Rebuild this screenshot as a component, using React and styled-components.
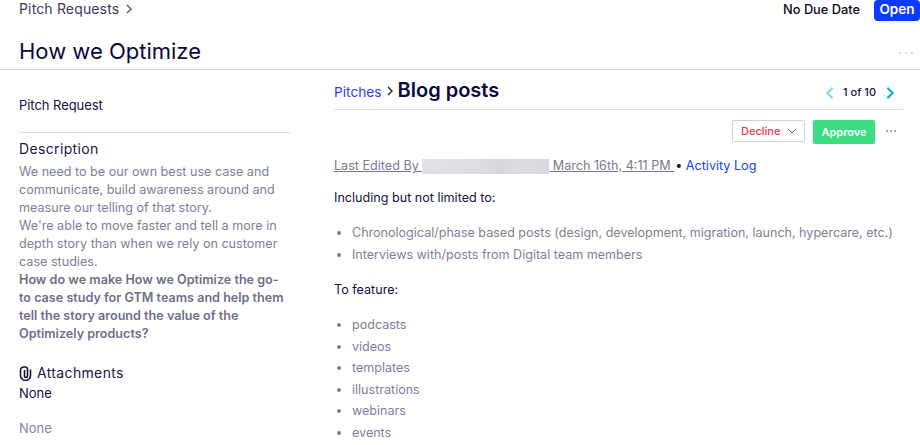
import React from "react";
import styled, { createGlobalStyle } from "styled-components";

const Global = createGlobalStyle`
  html, body { margin: 0; padding: 0; background: #fff; overflow: hidden; }
  body { font-family: Inter, "Liberation Sans", sans-serif; color: #0e0b3d; }
  * { box-sizing: border-box; }
`;
const Page = styled.div`width: 920px; height: 445px; overflow: hidden;`;
const TopBar = styled.div`display: flex; justify-content: space-between; align-items: flex-start; padding-left: 19px; height: 36px;`;
const Crumb = styled.div`display: flex; align-items: center; gap: 4px; font-size: 14px; line-height: 18px; color: #3c3a5e; letter-spacing: .15px;`;
const TopRight = styled.div`display: flex; align-items: flex-start; gap: 14px;`;
const Due = styled.span`font-size: 12.8px; font-weight: 500; line-height: 19px; color: #0b0b1e;`;
const OpenBadge = styled.span`background: #0b3bff; color: #fff; font-size: 13.5px; font-weight: 600; height: 21px; line-height: 19px; width: 46px; text-align: center; border-radius: 4px;`;
const TitleRow = styled.div`display: flex; justify-content: space-between; align-items: center; height: 34px; padding: 0 7px 0 19px; border-bottom: 1px solid #d0d0d8;`;
const Title = styled.h1`margin: 0 0 3px; font-size: 22px; font-weight: 400; line-height: 30px; color: #0a0a3a;`;
const Columns = styled.div`display: flex; gap: 43px; padding-left: 19px;`;
const Side = styled.aside`width: 272px; flex: none;`;
const SideLabel = styled.div`font-size: 13px; line-height: 18px; color: #14123f; letter-spacing: -.05px; padding-top: 26px; height: 63px; border-bottom: 1px solid #dcdce4;`;
const SideHead = styled.h3`margin: 0; display: flex; align-items: center; gap: 4px; font-size: 14px; font-weight: 400; line-height: 20px; letter-spacing: .35px; color: #1a1840;`;
const Desc = styled.p`margin: 0; font-size: 12.6px; line-height: 18px; color: #7f7e97; width: 270px; padding-top: 4px;`;
const DescStrong = styled.strong`font-weight: 600; color: #6f6e88;`;
const Description = styled.section`padding-top: 6px;`;
const Attach = styled.section`margin-top: 20px;`;
const NoneDark = styled.div`font-size: 13px; line-height: 20px; color: #14123f;`;
const NoneGrey = styled.div`font-size: 13px; line-height: 20px; color: #8685a0; margin-top: 15px;`;
const Main = styled.main`width: 569px; flex: none;`;
const MainHead = styled.div`display: flex; justify-content: space-between; align-items: center; height: 40px; border-bottom: 1px solid #dcdce4;`;
const HeadLeft = styled.div`display: flex; align-items: baseline; gap: 2px;`;
const PitchLink = styled.a`color: #2f3df5; font-size: 13.7px;`;
const SubTitle = styled.h2`margin: 0; font-size: 20px; font-weight: 600; color: #0a0a3a; line-height: 28px;`;
const Pager = styled.div`display: flex; align-items: center; gap: 5.5px; font-size: 11px; font-weight: 500; line-height: 14px; color: #14123f; padding-right: 5.5px; margin-top: 4px; svg { margin-top: 3px; }`;
const Actions = styled.div`display: flex; justify-content: flex-end; align-items: flex-start; height: 35px; padding-top: 10px; gap: 8px; padding-right: 7px;`;
const DeclineBtn = styled.button`display: flex; align-items: center; justify-content: flex-start; gap: 6px; width: 73px; height: 22px; background: #fff; border: 1px solid #cfcfd8; border-radius: 2px; color: #e23a55; font: 500 11px Inter, sans-serif; padding: 0 0 0 8px;`;
const ApproveBtn = styled.button`width: 62px; height: 24px; background: #3ddc84; border: 0; border-radius: 2px; color: #fff; font: 600 11px Inter, sans-serif; padding: 0;`;
const Dots = styled.span`display: flex; gap: ${p => p.$gap}px; margin: ${p => p.$mt || 0}px 0 0 ${p => p.$ml || 0}px; i { width: 2px; height: 2px; border-radius: 50%; background: ${p => p.$c}; }`;
const Meta = styled.div`margin-top: 12px; font-size: 12.6px; line-height: 18px; color: #7a7994; display: flex; align-items: center; white-space: pre;`;
const MetaUnder = styled.span`text-decoration: underline; display: inline-flex; align-items: center; white-space: pre;`;
const Blur = styled.span`display: inline-block; width: 127px; height: 15px; background: linear-gradient(90deg, #e0e0e6, #dcdce2 45%, #d6d6dd 62%, #dcdce2 80%, #d8d8df);`;
const BulletSep = styled.span`color: #14123f; margin-left: 1px;`;
const ActivityLink = styled.a`color: #1440ff;`;
const Para = styled.p`margin: ${p => p.$top}px 0 0; font-size: 12.6px; line-height: 18px; color: #14123f;`;
const List = styled.ul`margin: ${p => p.$top}px 0 0; padding: 0 0 0 18px; font-size: 12.55px; line-height: 21.5px; color: #7f7e97;`;

const Chevron = ({ dir = "right", color = "#444", size = 12, sw = 1.4 }) => (
  <svg width={size} height={size} viewBox="0 0 12 12" fill="none" stroke={color} strokeWidth={sw}>
    {dir === "right" && <path d="M4 2l4 4-4 4" />}
    {dir === "left" && <path d="M8 2L4 6l4 4" />}
    {dir === "down" && <path d="M2 4l4 4 4-4" />}
  </svg>
);

const Clip = () => (
  <svg width="14" height="15" viewBox="0 0 14 15" fill="none" stroke="#14123f" strokeWidth="1.6">
    <path d="M5.5 4v6a1.5 1.5 0 0 0 3 0V3.2A2.3 2.3 0 0 0 6.2 1H5A3.6 3.6 0 0 0 1.5 4.6V9.5a5 5 0 0 0 10 0V3.5" />
  </svg>
);

const ThreeDots = ({ color, ml, mt, gap = 2 }) => (
  <Dots $c={color} $ml={ml} $mt={mt} $gap={gap}><i /><i /><i /></Dots>
);

export default function App() {
  return (
    <Page>
      <Global />
      <TopBar>
        <Crumb>Pitch Requests <Chevron color="#55536f" /></Crumb>
        <TopRight>
          <Due>No Due Date</Due>
          <OpenBadge>Open</OpenBadge>
        </TopRight>
      </TopBar>
      <TitleRow>
        <Title>How we Optimize</Title>
        <ThreeDots color="#c8c8d2" gap={4} />
      </TitleRow>
      <Columns>
        <Side>
          <SideLabel>Pitch Request</SideLabel>
          <Description>
            <SideHead>Description</SideHead>
            <Desc>
              We need to be our own best use case and communicate, build awareness around and measure our telling of that story.<br />
              We're able to move faster and tell a more in depth story than when we rely on customer case studies.<br />
              <DescStrong>How do we make How we Optimize the go-to case study for GTM teams and help them tell the story around the value of the Optimizely products?</DescStrong>
            </Desc>
          </Description>
          <Attach>
            <SideHead><Clip /> Attachments</SideHead>
            <NoneDark>None</NoneDark>
            <NoneGrey>None</NoneGrey>
          </Attach>
        </Side>
        <Main>
          <MainHead>
            <HeadLeft>
              <PitchLink>Pitches</PitchLink>
              <Chevron color="#222" />
              <SubTitle>Blog posts</SubTitle>
            </HeadLeft>
            <Pager>
              <Chevron dir="left" color="#7fdcec" size={16} sw={1.6} />
              1 of 10
              <Chevron color="#18aed4" size={16} sw={1.6} />
            </Pager>
          </MainHead>
          <Actions>
            <DeclineBtn>Decline <Chevron dir="down" color="#e23a55" size={12} sw={1} /></DeclineBtn>
            <ApproveBtn>Approve</ApproveBtn>
            <ThreeDots color="#8a8a9a" ml={3} mt={10} />
          </Actions>
          <Meta>
            <MetaUnder>Last Edited By <Blur /> March 16th, 4:11 PM </MetaUnder>
            <BulletSep>{"•"}</BulletSep>
            <ActivityLink>{" Activity Log"}</ActivityLink>
          </Meta>
          <Para $top={14}>Including but not limited to:</Para>
          <List $top={15}>
            <li>Chronological/phase based posts (design, development, migration, launch, hypercare, etc.)</li>
            <li>Interviews with/posts from Digital team members</li>
          </List>
          <Para $top={16}>To feature:</Para>
          <List $top={15}>
            <li>podcasts</li>
            <li>videos</li>
            <li>templates</li>
            <li>illustrations</li>
            <li>webinars</li>
            <li>events</li>
          </List>
        </Main>
      </Columns>
    </Page>
  );
}
